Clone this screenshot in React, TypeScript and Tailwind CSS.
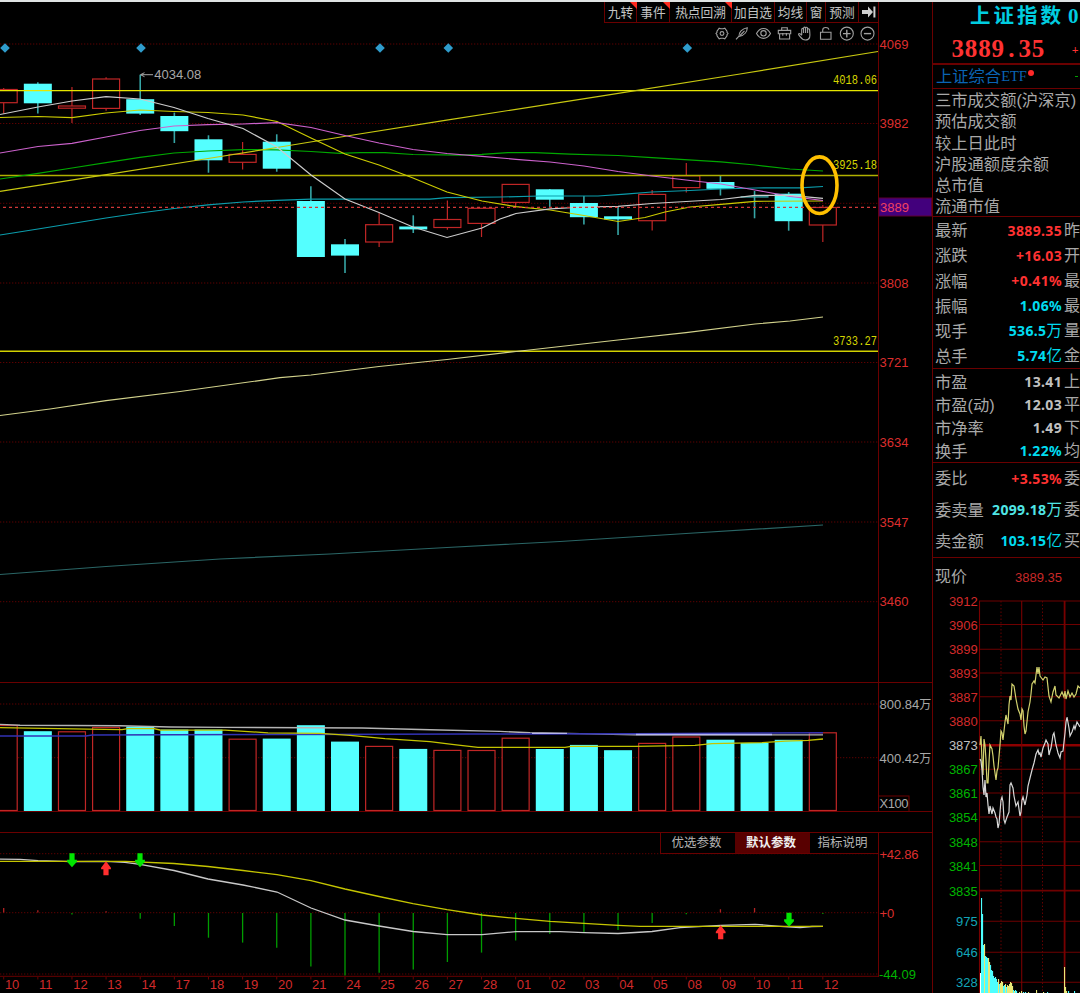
import { clsx } from "clsx";

const SANS = "'Liberation Sans', 'Noto Sans CJK SC', sans-serif";
const MONO = "'Liberation Mono', monospace";

// distance between two trading days on the x axis
const STEP = 34.13;
const dayX = (i: number) => 3.7 + i * STEP;

type Point = [number, number];

interface CandleProps {
  day: string;
  up: boolean;
  top: number;
  bottom: number;
  high: number;
  low: number;
  volume: number;
  macd: number;
}

const candles: CandleProps[] = [
  { day: "10", up: true, top: 89.5, bottom: 102.7, high: 88, low: 113.5, volume: 725.5, macd: 908 },
  { day: "11", up: false, top: 83.7, bottom: 103.3, high: 82.3, low: 113.5, volume: 731.2, macd: 910.3 },
  { day: "12", up: true, top: 106, bottom: 108.2, high: 87, low: 123, volume: 731.8, macd: 914.6 },
  { day: "13", up: true, top: 79, bottom: 108.4, high: 77.3, low: 110.7, volume: 727.5, macd: 911.3 },
  { day: "14", up: false, top: 99.2, bottom: 113.6, high: 74.7, low: 115, volume: 726.6, macd: 918.7 },
  { day: "17", up: false, top: 116, bottom: 131.2, high: 112.6, low: 143, volume: 729.6, macd: 926 },
  { day: "18", up: false, top: 139.3, bottom: 160.3, high: 135.3, low: 172.7, volume: 729.6, macd: 937.7 },
  { day: "19", up: true, top: 154.4, bottom: 162.3, high: 142, low: 169.6, volume: 739.2, macd: 942.6 },
  { day: "20", up: false, top: 141.7, bottom: 168.7, high: 134.3, low: 171.7, volume: 738.6, macd: 947.7 },
  { day: "21", up: false, top: 201, bottom: 257, high: 186.3, low: 257, volume: 725.2, macd: 966.5 },
  { day: "24", up: false, top: 244.3, bottom: 255.6, high: 239, low: 273, volume: 741.6, macd: 975.5 },
  { day: "25", up: true, top: 224.7, bottom: 242, high: 213, low: 247, volume: 746.4, macd: 972.7 },
  { day: "26", up: false, top: 226.5, bottom: 229.4, high: 215.3, low: 233, volume: 748.9, macd: 969.5 },
  { day: "27", up: true, top: 219.5, bottom: 227.5, high: 200.5, low: 229.7, volume: 750.4, macd: 962 },
  { day: "28", up: true, top: 208.3, bottom: 223.4, high: 208, low: 237, volume: 750.5, macd: 952.6 },
  { day: "01", up: true, top: 184.4, bottom: 202.4, high: 184, low: 206, volume: 738.2, macd: 940.4 },
  { day: "02", up: false, top: 189.3, bottom: 199.7, high: 189, low: 207, volume: 749, macd: 934 },
  { day: "03", up: false, top: 203, bottom: 217.2, high: 196, low: 224.4, volume: 744.9, macd: 932.3 },
  { day: "04", up: false, top: 216.3, bottom: 219.4, high: 207, low: 235, volume: 750.2, macd: 930 },
  { day: "05", up: true, top: 194.4, bottom: 220.7, high: 190, low: 230.6, volume: 743.4, macd: 923 },
  { day: "08", up: true, top: 175.8, bottom: 187.6, high: 163, low: 192.4, volume: 737, macd: 914.2 },
  { day: "09", up: false, top: 182, bottom: 188.8, high: 175.3, low: 195.5, volume: 739.7, macd: 909.2 },
  { day: "10", up: false, top: 196.2, bottom: 197.6, high: 191, low: 218.3, volume: 743, macd: 908 },
  { day: "11", up: false, top: 193.7, bottom: 221.2, high: 192, low: 230.7, volume: 739.8, macd: 913 },
  { day: "12", up: true, top: 207.5, bottom: 225, high: 205, low: 242, volume: 732.8, macd: 914 },
];

const ma5: Point[] = [
  [0, 114.5], [38, 107], [72, 101], [106, 96.7], [140, 99], [174, 107.5], [208, 118.5], [243, 128.5],
  [277, 147], [311, 175], [345, 199], [379, 212.5], [413, 227], [447, 237.5], [482, 228], [500, 219],
  [516, 213.5], [550, 208.8], [584, 207], [618, 206.3], [652, 203.5], [686, 201.5], [721, 199.5],
  [755, 195.3], [790, 195.3], [823, 198.4],
];
const ma10: Point[] = [
  [0, 117.5], [38, 116.5], [72, 117.7], [106, 113], [140, 110], [174, 111.5], [208, 112.5], [243, 115],
  [277, 121.5], [311, 138], [345, 154], [379, 165], [413, 178], [447, 192], [482, 201], [516, 206.6],
  [550, 210], [584, 215.5], [618, 221.5], [645, 217.5], [665, 212], [690, 207], [721, 204.3],
  [755, 201.3], [823, 201],
];
const ma20: Point[] = [
  [0, 153], [38, 146.5], [72, 143.3], [106, 137], [140, 130.5], [174, 126], [208, 124.7], [243, 124],
  [277, 122.6], [311, 127.5], [345, 135.5], [379, 143], [413, 149.5], [447, 153.5], [482, 156.3],
  [516, 159.3], [550, 162], [584, 166], [618, 171.5], [652, 176], [686, 180], [721, 184], [755, 190],
  [790, 196.3], [823, 200.5],
];
const ma60: Point[] = [
  [0, 179], [38, 173.3], [72, 168], [106, 162.7], [140, 157.3], [174, 153], [208, 151], [243, 149.6],
  [277, 149.8], [311, 151.5], [340, 153.3], [360, 152.7], [385, 152.7], [413, 154.5], [460, 155.2],
  [482, 154.4], [508, 152.6], [535, 152.6], [570, 154.2], [618, 155.5], [652, 157.7], [721, 161.8],
  [755, 165], [790, 169], [823, 171],
];
const ma120: Point[] = [
  [0, 235], [38, 229], [72, 223.5], [106, 218], [140, 213], [174, 208.5], [208, 204.8], [243, 202],
  [277, 200.3], [311, 199.2], [430, 199.2], [447, 197.6], [500, 197], [540, 196], [598, 196],
  [625, 194.2], [652, 192], [690, 190.5], [721, 189], [755, 188], [800, 187.8], [823, 186.5],
];
const trend: Point[] = [
  [0, 191.3], [100, 175.7], [208, 158.5], [277, 147.5], [350, 135.5], [445, 120.3], [604, 95.7],
  [740, 74], [878, 51.5],
];
const ma250: Point[] = [
  [0, 415.5], [50, 409], [106, 400.7], [180, 391.5], [280, 377.7], [311, 375], [379, 366.5],
  [447, 359.5], [516, 351.5], [618, 340], [686, 332.7], [755, 324], [790, 321], [823, 317],
];
const maLong: Point[] = [
  [0, 574.5], [106, 566.5], [220, 559], [330, 554], [447, 547.5], [560, 541.5], [686, 533.5], [823, 525],
];

const volWhite: Point[] = [
  [0, 724.4], [20, 725.2], [120, 725.8], [170, 727], [225, 727.4], [362, 728], [430, 729.7],
  [500, 731.4], [530, 732.8], [567, 733.4], [635, 734.7], [823, 734.9],
];
const volBlue: Point[] = [
  [0, 736], [86, 735.9], [92, 734.9], [300, 734.5], [470, 734], [635, 733.8], [770, 733], [823, 732.7],
];
const volYellow: Point[] = [
  [0, 727.7], [88, 729.2], [122, 729.7], [128, 728.6], [154, 728.6], [160, 730], [225, 730.2],
  [268, 732.8], [320, 733.4], [350, 735.4], [385, 738.6], [430, 741.6], [452, 744.3], [478, 747.3],
  [565, 747.3], [571, 746.4], [635, 746.4], [695, 745.3], [712, 743.7], [762, 742.7], [785, 741.2],
  [808, 740.3], [823, 739],
];

const dif: Point[] = [
  [0, 859.2], [20, 859.4], [38, 860.7], [72, 861.7], [106, 861.3], [125, 862.3], [140, 864.3],
  [174, 870.5], [208, 879], [243, 885], [277, 892], [311, 908], [345, 920], [379, 926], [413, 931.5],
  [447, 934.6], [482, 934.6], [516, 931.7], [560, 931.7], [584, 932.6], [618, 933.5], [652, 931.5],
  [680, 927.7], [721, 925.3], [755, 924.3], [780, 926.3], [800, 927.6], [812, 926.5], [823, 926.3],
];
const dea: Point[] = [
  [0, 861.3], [125, 861.4], [174, 863.5], [208, 866.5], [243, 870.5], [277, 874.7], [311, 880.7],
  [345, 889], [379, 896.5], [413, 903.7], [447, 909.7], [482, 915], [516, 918.4], [550, 921.3],
  [584, 923.4], [618, 925.3], [640, 926.3], [823, 926.4],
];

const priceAxis = [
  { y: 44, label: "4069" },
  { y: 123.5, label: "3982" },
  { y: 203.3, label: "" },
  { y: 283, label: "3808" },
  { y: 362.5, label: "3721" },
  { y: 442, label: "3634" },
  { y: 522, label: "3547" },
  { y: 601.7, label: "3460" },
];

const levels = [
  { y: 90.6, label: "4018.06", color: "#e6e600" },
  { y: 175.5, label: "3925.18", color: "#b0b000" },
  { y: 351.3, label: "3733.27", color: "#d2d200" },
];

const intradayAxis = [
  { y: 601, label: "3912", color: "#d22a2a" },
  { y: 624.5, label: "3906", color: "#d22a2a" },
  { y: 649.3, label: "3899", color: "#d22a2a" },
  { y: 673, label: "3893", color: "#d22a2a" },
  { y: 696.7, label: "3887", color: "#d22a2a" },
  { y: 720.7, label: "3880", color: "#d22a2a" },
  { y: 745.3, label: "3873", color: "#c0c0c0" },
  { y: 769.3, label: "3867", color: "#00b400" },
  { y: 793, label: "3861", color: "#00b400" },
  { y: 817, label: "3854", color: "#00b400" },
  { y: 841.7, label: "3848", color: "#00b400" },
  { y: 865.5, label: "3841", color: "#00b400" },
  { y: 890.7, label: "3835", color: "#00b400" },
  { y: 921.3, label: "975", color: "#12a5b8" },
  { y: 952.3, label: "646", color: "#12a5b8" },
  { y: 982.3, label: "328", color: "#12a5b8" },
];

const avgLine: Point[] = [
  [980, 745], [981, 736], [982, 760], [983, 775], [984, 739], [985, 745], [986, 760], [987, 783],
  [988, 783], [989, 762], [990, 745], [992, 749], [993, 756], [994, 766], [996, 780], [997, 771],
  [998, 768], [1000, 745], [1001, 731], [1002, 733], [1003, 740], [1005, 722], [1006, 715],
  [1008, 724], [1009, 705], [1010, 696], [1011, 700], [1012, 684], [1014, 686], [1016, 699],
  [1018, 709], [1020, 714], [1021, 720], [1022, 709], [1023, 711], [1024, 726], [1025, 734],
  [1026, 731], [1028, 712], [1030, 702], [1031, 694], [1032, 684], [1034, 681], [1035, 683],
  [1037, 667], [1038, 674], [1039, 667], [1040, 676], [1043, 680], [1045, 677], [1047, 678],
  [1049, 696], [1051, 702], [1053, 692], [1055, 686], [1056, 695], [1059, 698], [1062, 692],
  [1064, 697], [1065, 691], [1066, 699], [1068, 691], [1070, 697], [1072, 693], [1074, 697],
  [1076, 694], [1078, 686], [1080, 688],
];
const priceLine: Point[] = [
  [980, 759], [981, 761], [982, 770], [983, 787], [984, 795], [985, 780], [986, 797], [987, 793],
  [988, 805], [989, 814], [990, 806], [992, 814], [993, 808], [995, 813], [996, 817], [997, 819],
  [998, 828], [999, 824], [1001, 800], [1002, 797], [1003, 802], [1004, 820], [1005, 823],
  [1007, 817], [1009, 812], [1010, 785], [1011, 783], [1013, 788], [1014, 796], [1016, 806],
  [1018, 802], [1020, 816], [1021, 812], [1022, 800], [1023, 797], [1025, 805], [1027, 795],
  [1028, 786], [1030, 778], [1032, 770], [1034, 763], [1036, 754], [1038, 750], [1039, 754],
  [1040, 753], [1041, 757], [1043, 748], [1045, 743], [1046, 740], [1048, 744], [1049, 755],
  [1050, 751], [1051, 748], [1053, 735], [1054, 733], [1056, 745], [1058, 753], [1060, 758],
  [1061, 752], [1063, 751], [1065, 733], [1066, 722], [1067, 717], [1069, 728], [1070, 736],
  [1072, 732], [1074, 726], [1075, 729], [1077, 722], [1080, 727],
];

// x, top, color flag (w = white, c = cyan, y = yellow)
const minuteVolumes: [number, number, "w" | "c" | "y"][] = [
  [980, 973, "w"], [981, 898, "c"], [982, 914, "c"], [983, 945, "c"], [984, 944, "y"], [985, 956, "c"],
  [986, 957, "c"], [987, 958, "c"], [988, 958, "y"], [989, 962, "y"], [990, 965, "c"], [991, 970, "c"],
  [992, 971, "c"], [993, 976, "c"], [994, 978, "c"], [995, 977, "c"], [996, 979, "c"], [997, 982, "c"],
  [998, 979, "y"], [999, 984, "c"], [1000, 983, "y"], [1001, 981, "y"], [1002, 982, "y"],
  [1003, 986, "c"], [1004, 985, "c"], [1005, 984, "y"], [1006, 987, "c"], [1007, 985, "y"],
  [1008, 986, "y"], [1009, 984, "y"], [1010, 982, "y"], [1011, 983, "y"], [1012, 986, "y"],
  [1013, 990, "c"], [1014, 991, "y"], [1015, 990, "c"], [1016, 991, "c"], [1019, 992, "y"],
  [1021, 991, "y"], [1023, 992, "c"], [1025, 992, "c"], [1028, 992, "y"], [1036, 990, "y"],
  [1043, 992, "y"], [1047, 992, "c"], [1064, 967, "y"], [1065, 987, "y"], [1066, 991, "y"],
  [1068, 991, "c"], [1074, 991, "c"],
];
const volumeColor = { w: "#ffffff", c: "#4dffff", y: "#e8e878" };

const tools = [
  { label: "九转", width: "w-[32px]", hot: true },
  { label: "事件", width: "w-[33px]", hot: true },
  { label: "热点回溯", width: "w-[62px]", hot: true },
  { label: "加自选", width: "w-[43px]", hot: false },
  { label: "均线", width: "w-[32px]", hot: false },
  { label: "窗", width: "w-[19px]", hot: false },
  { label: "预测", width: "w-[33px]", hot: false },
];

const totals = ["三市成交额(沪深京)", "预估成交额", "较上日此时", "沪股通额度余额", "总市值", "流通市值"];

interface QuoteProps {
  name: string;
  value: string;
  unit?: string;
  tone: "red" | "cyan" | "aqua" | "gray";
  next: string;
}

const quotes: QuoteProps[] = [
  { name: "最新", value: "3889.35", tone: "red", next: "昨" },
  { name: "涨跌", value: "+16.03", tone: "red", next: "开" },
  { name: "涨幅", value: "+0.41%", tone: "red", next: "最" },
  { name: "振幅", value: "1.06%", tone: "cyan", next: "最" },
  { name: "现手", value: "536.5", unit: "万", tone: "cyan", next: "量" },
  { name: "总手", value: "5.74", unit: "亿", tone: "cyan", next: "金" },
];
const ratios: QuoteProps[] = [
  { name: "市盈", value: "13.41", tone: "gray", next: "上" },
  { name: "市盈(动)", value: "12.03", tone: "gray", next: "平" },
  { name: "市净率", value: "1.49", tone: "gray", next: "下" },
  { name: "换手", value: "1.22%", tone: "cyan", next: "均" },
];
const orders: QuoteProps[] = [
  { name: "委比", value: "+3.53%", tone: "red", next: "委" },
  { name: "委卖量", value: "2099.18", unit: "万", tone: "aqua", next: "委" },
  { name: "卖金额", value: "103.15", unit: "亿", tone: "cyan", next: "买" },
];

function Line({ points, color, width = 1.2 }: { points: Point[]; color: string; width?: number }) {
  return (
    <polyline
      points={points.map((p) => p.join(",")).join(" ")}
      fill="none"
      stroke={color}
      strokeWidth={width}
    />
  );
}

function Dotted({ y }: { y: number }) {
  return <line x1="0" x2="878" y1={y} y2={y} stroke="#5c0000" strokeWidth="1" strokeDasharray="1.3 1.7" />;
}

function Toolbar() {
  return (
    <div className="flex h-[21px] pl-[604px] pr-[53px]">
      <div className="flex flex-1 border-b border-l border-[#6a0000]">
        {tools.map((tool) => (
          <div
            key={tool.label}
            className={clsx(
              "relative flex shrink-0 items-center justify-center whitespace-nowrap border-r border-[#6a0000] pt-[3px] text-[12.7px] leading-none text-[#c4c4c4]",
              tool.width
            )}
          >
            {tool.label}
            {tool.hot && (
              <svg className="absolute -right-px top-0" width="7" height="7" viewBox="0 0 7 7">
                <path d="M0 0H7V7Z" fill="#ff2a1e" />
              </svg>
            )}
          </div>
        ))}
        <div className="flex flex-1 items-center justify-center">
          <svg width="14" height="12" viewBox="0 0 14 12" fill="#d0d0d0">
            <path d="M0 4H6V0.6L11 6L6 11.4V8H0Z" />
            <rect x="11.4" y="0.5" width="2" height="11" />
          </svg>
        </div>
      </div>
      <div className="w-px bg-[#6a0000]" />
    </div>
  );
}

function DrawTools() {
  return (
    <svg
      className="absolute left-[712px] top-[2px]"
      width="168"
      height="18"
      viewBox="712 25 168 18"
      fill="none"
      stroke="#a0a0a0"
      strokeWidth="1.1"
    >
      <path d="M719.2 28.2L720.8 28.8H723.2L724.8 28.2L727 31.2V32.4L728 33.5L727 34.6V35.8L724.8 38.8L723.2 38.2H720.8L719.2 38.8L717 35.8V34.6L716 33.5L717 32.4V31.2Z" />
      <circle cx="722" cy="33.5" r="1.9" />

      <path d="M736 39.3L739.5 35.6M739 36.5C738.6 32.5 742 28.6 747.3 27.8C747.2 31.5 744.5 35.5 739 36.5ZM740 35.5L744.5 30.8" />

      <path d="M756.5 33.5C760 26.8 767 26.8 770.5 33.5C767 40 760 40 756.5 33.5Z" />
      <circle cx="763.5" cy="33.3" r="2.7" />

      <path d="M778.3 30.4H790.7V33.8H778.3ZM779.6 33.8V39H789.6V33.8M781.7 30.4V27.8H787.3V30.4M782.8 33V35.8M786.4 33V35.8" />

      <path d="M801.7 35V29.5C801.7 28 803.6 28 803.6 29.5V33V28.2C803.6 26.7 805.6 26.7 805.6 28.2V33V28.2C805.6 26.9 807.6 26.9 807.6 28.4V33V29.7C807.6 28.4 809.6 28.4 809.6 29.8C809.6 33 811.7 40 805.5 40C801.5 40 801 37.5 798.7 34.8C798 33.5 799.8 32.9 801.7 35.3" />

      <path d="M820.5 32.3H831V39.3H820.5ZM822.7 32.3V30C822.7 26.7 828.8 26.7 828.8 29.7" />

      <circle cx="846.8" cy="33.6" r="6.5" />
      <path d="M843 33.6H850.6M846.8 29.8V37.4" strokeWidth="1.4" />
      <circle cx="867.5" cy="33.6" r="6.5" />
      <path d="M863.9 33.6H871.1" strokeWidth="1.4" />
    </svg>
  );
}

function PriceChart() {
  return (
    <div className="relative h-[659px]">
      <svg width="932" height="659" viewBox="0 23 932 659" fontFamily={SANS} fontSize="13">
        {priceAxis.map((row) => (
          <g key={row.y}>
            <Dotted y={row.y} />
            <text x="879.5" y={row.y + 4.7} fill="#dc2e2e">
              {row.label}
            </text>
          </g>
        ))}
        <line x1="878.5" x2="878.5" y1="23" y2="682" stroke="#6a0000" />

        {candles.map((c, i) => {
          const x = dayX(i);
          return c.up ? (
            <g key={i} stroke="#c02626" strokeWidth="1.2">
              <path d={`M${x} ${c.high}V${c.top}M${x} ${c.bottom}V${c.low}`} />
              <rect x={x - 13.5} y={c.top} width="27" height={c.bottom - c.top} fill="none" />
            </g>
          ) : (
            <g key={i}>
              <line x1={x} x2={x} y1={c.high} y2={c.low} stroke="#36a6a6" strokeWidth="1.6" />
              <rect
                x={x - 14}
                y={c.top}
                width="28"
                height={c.bottom - c.top}
                fill={i === 22 ? "#36a6a6" : "#54ffff"}
              />
            </g>
          );
        })}

        {levels.map((level) => (
          <g key={level.label}>
            <line x1="0" x2="878" y1={level.y} y2={level.y} stroke={level.color} strokeWidth="1.4" />
            <text
              x="833"
              y={level.y - 6.7}
              fill="#d6d600"
              fontFamily={MONO}
              fontSize="12.5"
              textLength="44"
              lengthAdjust="spacingAndGlyphs"
            >
              {level.label}
            </text>
          </g>
        ))}
        <Line points={ma120} color="#0b9dac" />
        <Line points={ma60} color="#00a800" />
        <Line points={trend} color="#c8c810" />
        <Line points={ma10} color="#cccc00" />
        <Line points={ma20} color="#cc62cc" />
        <Line points={ma5} color="#cccccc" />
        <Line points={ma250} color="#d2d28c" />
        <Line points={maLong} color="#2a6666" />
        <line x1="3" x2="878" y1="207.4" y2="207.4" stroke="#d03838" strokeWidth="1.1" strokeDasharray="3 3" />

        {[5, 141, 380, 448.3, 687.3].map((x) => (
          <path key={x} d={`M${x - 4.8} 48L${x} 43.3L${x + 4.8} 48L${x} 52.7Z`} fill="#2f9ccc" />
        ))}

        <path d="M141 74.7H153M144.5 72.7L140.5 74.7L144.5 76.7" stroke="#a8a8a8" fill="none" />
        <text x="154.2" y="79" fill="#a8a8a8">
          4034.08
        </text>

        <rect x="879" y="198" width="52.5" height="18" fill="#42007c" stroke="#5c0030" />
        <text x="880" y="211.5" fill="#f04060">
          3889
        </text>

        <ellipse cx="819.5" cy="185.2" rx="17.5" ry="28.3" fill="none" stroke="#ffc000" strokeWidth="3.6" />
      </svg>
      <DrawTools />
    </div>
  );
}

function VolumeChart() {
  return (
    <svg className="block" width="932" height="150" viewBox="0 682 932 150" fontFamily={SANS} fontSize="13">
      <Dotted y={704} />
      <Dotted y={757.7} />
      <path d="M0 682.5H932M0 811.5H932M878.5 682V812" stroke="#6a0000" />
      {candles.map((c, i) =>
        c.up ? (
          <rect
            key={i}
            x={dayX(i) - 13.5}
            y={c.volume}
            width="27"
            height={810.5 - c.volume}
            fill="#000"
            stroke="#c02626"
            strokeWidth="1.2"
          />
        ) : (
          <rect key={i} x={dayX(i) - 14} y={c.volume} width="28" height={811 - c.volume} fill="#54ffff" />
        )
      )}
      <Line points={volWhite} color="#b4b4b4" width={1.4} />
      <Line points={volBlue} color="#3232b4" width={1.5} />
      <path d="M532 733.4H567M636 734.5H772" stroke="#b4b4f0" strokeWidth="1.3" />
      <Line points={volYellow} color="#c4c400" width={1.3} />

      <text x="879.5" y="708.7" fill="#a8a8a8">
        800.84<tspan fontSize="12">万</tspan>
      </text>
      <text x="879.5" y="762.5" fill="#a8a8a8">
        400.42<tspan fontSize="12">万</tspan>
      </text>
      <rect x="878.5" y="796" width="30.5" height="15.5" fill="none" stroke="#6a0000" />
      <text x="879.5" y="808" fill="#a8a8a8" textLength="29">
        X100
      </text>
    </svg>
  );
}

function Arrow({ x, y, up }: { x: number; y: number; up?: boolean }) {
  return up ? (
    <path
      d={`M${x} ${y}L${x + 4.9} ${y + 6.5}V${y + 8}H${x + 2.6}V${y + 14}H${x - 2.6}V${y + 8}H${x - 4.9}V${y + 6.5}Z`}
      fill="#ff2e2e"
    />
  ) : (
    <path
      d={`M${x} ${y + 14}L${x + 4.9} ${y + 8.5}V${y + 6.5}H${x + 2.6}V${y}H${x - 2.6}V${y + 6.5}H${x - 4.9}V${y + 8.5}Z`}
      fill="#00e600"
    />
  );
}

function MacdChart() {
  return (
    <div className="relative h-[161px]">
      <svg className="block" width="932" height="161" viewBox="0 832 932 161" fontFamily={SANS} fontSize="13">
        <Dotted y={853.7} />
        <Dotted y={912.7} />
        <Dotted y={974} />
        <path d="M0 832.5H932M0 976.3H878M878.5 832V977" stroke="#6a0000" />
        {candles.map((c, i) => {
          const red = c.macd < 912;
          return (
            <g key={i}>
              <line x1={dayX(i)} x2={dayX(i)} y1="977" y2="979.5" stroke="#6a0000" />
              {c.macd !== 913 && (
                <line
                  x1={dayX(i)}
                  x2={dayX(i)}
                  y1={red ? 912.5 : 913}
                  y2={c.macd}
                  stroke={red ? "#b42222" : "#009c00"}
                  strokeWidth="1.3"
                />
              )}
              <text x={dayX(i) + 1.2} y="989.2" fill="#d02a2a">
                {c.day}
              </text>
            </g>
          );
        })}
        <Line points={dif} color="#c8c8c8" width={1.3} />
        <Line points={dea} color="#c4c400" width={1.3} />
        <Arrow x={72} y={853.3} />
        <Arrow x={140} y={853.3} />
        <Arrow x={789} y={912.7} />
        <Arrow x={106} y={861.3} up />
        <Arrow x={720.7} y={925.3} up />

        <text x="879.5" y="858.7" fill="#dc2e2e" textLength="39">
          +42.86
        </text>
        <text x="879.5" y="917.7" fill="#dc2e2e">
          +0
        </text>
        <text x="879" y="978.7" fill="#00b400">
          -44.09
        </text>
      </svg>
      <div className="absolute left-[660px] top-0 flex h-[22px] w-[219px] border border-[#6a0000] bg-black text-[12.5px] leading-none text-[#b4b4b4]">
        <span className="flex w-[74px] items-center justify-center pr-[3px] pt-px">优选参数</span>
        <span className="flex w-[75px] items-center justify-center bg-[#580000] pr-[3px] pt-px font-bold text-[#eeeeee]">
          默认参数
        </span>
        <span className="flex flex-1 items-center justify-center pr-[3px] pt-px">指标说明</span>
      </div>
    </div>
  );
}

function QuoteRow({ item, className }: { item: QuoteProps; className: string }) {
  return (
    <div
      className={clsx(
        "flex items-center whitespace-nowrap pl-[2px] text-[16.3px] leading-none text-[#a8a8a8]",
        className
      )}
    >
      <div className="flex w-[127px] shrink-0 items-center justify-between">
        <span>{item.name}</span>
        <span
          className={clsx("flex items-center", {
            "text-[#ff3232]": item.tone === "red",
            "text-[#00dcf0]": item.tone === "cyan",
            "text-[#50e6e6]": item.tone === "aqua",
            "text-[#c0c0c0]": item.tone === "gray",
          })}
        >
          <b className="font-['Noto_Sans'] text-[14px] tracking-[0.35px]">{item.value}</b>
          {item.unit && <span className="text-[15.5px]">{item.unit}</span>}
        </span>
      </div>
      <span className="ml-[2px] text-[16px]">{item.next}</span>
    </div>
  );
}

function IntradayChart() {
  return (
    <svg className="block" width="147" height="397" viewBox="933 596 147 397" fontFamily={SANS} fontSize="13">
      {intradayAxis.map((row) => (
        <g key={row.label}>
          <line
            x1="979"
            x2="1080"
            y1={row.y}
            y2={row.y}
            stroke={row.label === "3873" ? "#8c0000" : "#6e0000"}
            strokeWidth={row.label === "3873" ? 2.6 : row.label === "3835" ? 1.8 : 1.1}
          />
          <text x="977.8" y={row.y + 5} fill={row.color} textAnchor="end">
            {row.label}
          </text>
        </g>
      ))}
      <path d="M979.5 601V993M1021.7 601V993" stroke="#780000" strokeWidth="1.1" />
      <path d="M1064.6 601V993" stroke="#780000" strokeWidth="1.8" />
      <path d="M1001 601V993M1042.5 601V993" stroke="#640000" strokeDasharray="1.5 2" />
      <Line points={avgLine} color="#d2d26e" />
      <Line points={priceLine} color="#d8d8d8" />
      {minuteVolumes.map(([x, y, color]) => (
        <rect key={x} x={x} y={y} width="1.1" height={993 - y} fill={volumeColor[color]} />
      ))}
    </svg>
  );
}

function QuotePanel() {
  return (
    <div className="w-[148px] overflow-hidden border-l border-[#6a0000]">
      <div className="h-[61px] whitespace-nowrap">
        <div className="flex h-[28px] items-center pl-[37px] leading-none text-[#00cde0]">
          <b className="text-[20.5px] tracking-[3px]">上证指数</b>
          <b className="ml-[4px] font-['Liberation_Serif'] text-[21px]">0</b>
        </div>
        <div className="flex h-[36px] items-center pl-[18px] font-['Liberation_Serif'] text-[25px] font-bold leading-none text-[#ff3232]">
          {"3889.35".split("").map((char, i) => (
            <span key={i} className="w-[13.4px] shrink-0 text-center">
              {char}
            </span>
          ))}
          <span className="ml-[27px] mt-[4px] shrink-0 text-[12px]">+</span>
        </div>
      </div>

      <div className="flex h-[25px] items-center whitespace-nowrap border-t-2 border-[#6a0000] pl-[3px] text-[16.3px] leading-none text-[#0a64b4]">
        上证综合
        <span className="inline-block w-[25px] font-['Liberation_Serif'] text-[14.5px]">ETF</span>
        <span className="mb-[8px] ml-[2px] size-[6px] shrink-0 rounded-full bg-[#ff2828]" />
        <span className="ml-[41px] h-px w-[3px] shrink-0 bg-[#00a000]" />
      </div>

      <div className="h-[128px] border-t border-[#6a0000] pl-[2px] pt-[1px]">
        {totals.map((label) => (
          <div
            key={label}
            className="flex h-[21.1px] items-center whitespace-nowrap text-[16.3px] leading-none text-[#a8a8a8]"
          >
            {label}
          </div>
        ))}
      </div>

      <div className="h-[152px] border-t border-[#6a0000] pt-[1px]">
        {quotes.map((item) => (
          <QuoteRow key={item.name} item={item} className="h-[25.1px]" />
        ))}
      </div>
      <div className="h-[94px] border-t border-[#6a0000] pt-[2px]">
        {ratios.map((item) => (
          <QuoteRow key={item.name} item={item} className="h-[22.8px]" />
        ))}
      </div>
      <div className="h-[95px] border-t border-[#6a0000]">
        {orders.map((item) => (
          <QuoteRow key={item.name} item={item} className="h-[31.2px]" />
        ))}
      </div>

      <div className="border-t border-[#6a0000]">
        <div className="flex h-[38px] w-[129px] items-center justify-between pl-[2px] leading-none">
          <span className="text-[16px] text-[#a8a8a8]">现价</span>
          <span className="text-[13px] text-[#c82828]">3889.35</span>
        </div>
        <IntradayChart />
      </div>
    </div>
  );
}

export default function App() {
  return (
    <div className="h-[993px] w-[1080px] overflow-hidden bg-black font-['Liberation_Sans','Noto_Sans_CJK_SC',sans-serif]">
      <div className="h-[2px] bg-[#dfe3e3]" />
      <div className="flex">
        <div className="w-[932px] shrink-0">
          <Toolbar />
          <PriceChart />
          <VolumeChart />
          <MacdChart />
        </div>
        <QuotePanel />
      </div>
    </div>
  );
}
